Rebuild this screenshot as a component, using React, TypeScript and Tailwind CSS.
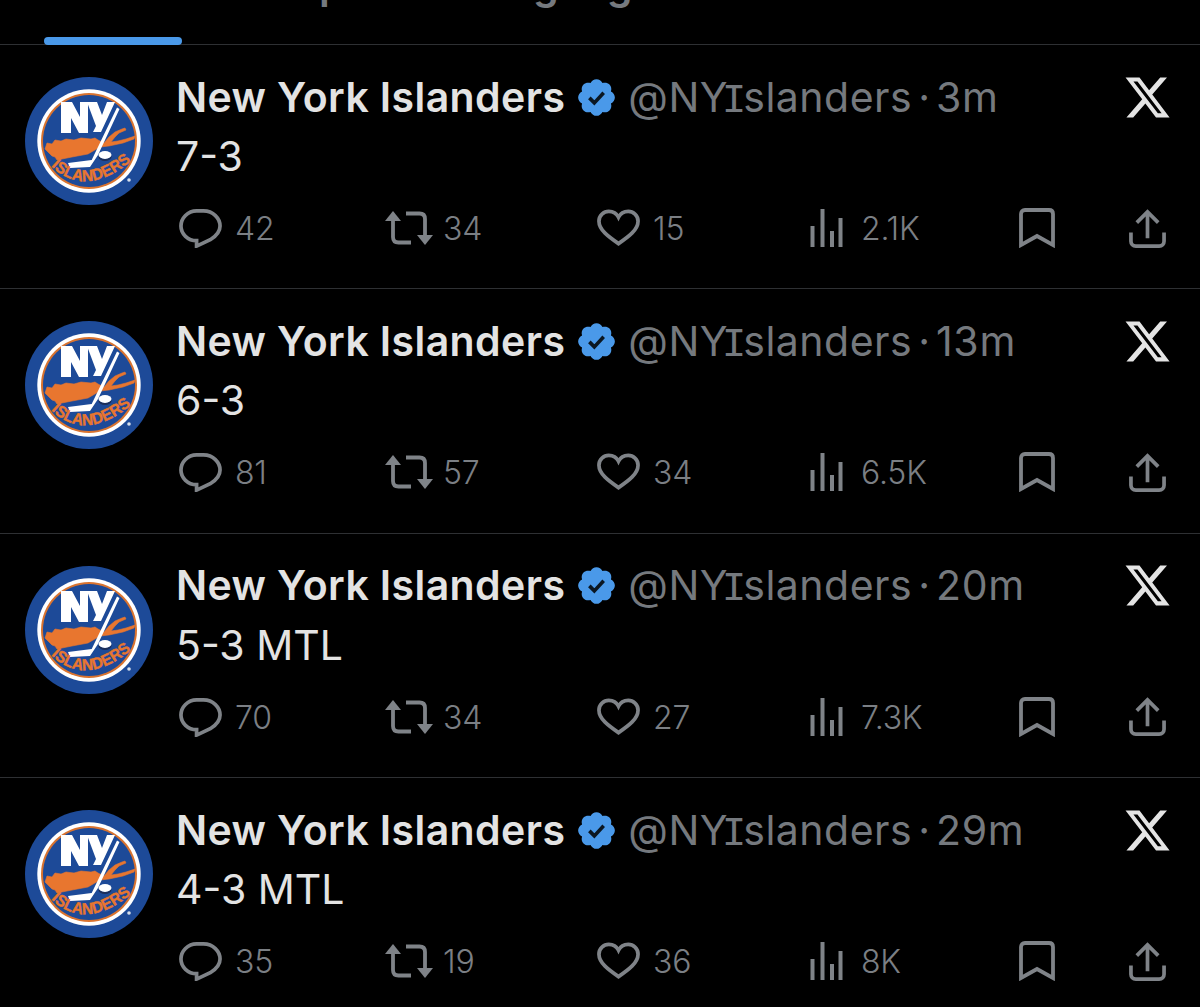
const FONT = "font-['Inter','Liberation_Sans',sans-serif]";

function Logo() {
  return (
    <svg viewBox="0 0 128 128" className="h-[128px] w-[128px] shrink-0">
      <circle cx="64" cy="64" r="64" fill="#1d4a98" />
      <circle cx="64" cy="64" r="51.7" fill="#ffffff" />
      <circle cx="64" cy="64" r="48" fill="#d9732f" />
      <circle cx="64" cy="64" r="46" fill="#1d4a98" />
      <path d="M36 25 H47 L55 40 V25 H63 V56 H54 L46 41 V56 H36 Z" fill="#ffffff" />
      <path d="M62 25 H72 L77 38 L82 25 H90 L76 55 H68 L71 49 Z" fill="#ffffff" />
      <path d="M20 72 l2 -6 l5 1 l3 -4 l6 1 l5 -2 l8 1 l7 -2 l10 1 l4 -1 l3 2 l6 3 l5 -6 l6 -5 l7 -3 l3 -1 l1 2 l-7 3 l-4 4 l-4 5 l7 -1 l8 -2 l9 -3 l-1 3 l-11 4 l-14 3 l-9 1 l-12 7 l-16 3 l-10 2 l-5 1 l-2 -3 l-3 -1 Z" fill="#e8762f" stroke="#e8762f" strokeWidth="0.6" />
      <path d="M92 30.5 L66.7 83 L43 86 L45 91 L65 90 L73 78 L94.5 32 Z" fill="#ffffff" />
      <ellipse cx="80" cy="78" rx="6.5" ry="4" fill="#ffffff" />
      <path d="M73.5 78 a6.5 4 0 0 0 13 0 v2 a6.5 4 0 0 1 -13 0 Z" fill="#1c2f5a" />
      <path id="logoArc" d="M26 89 Q60 122 106 84" fill="none" />
      <text fontFamily="Liberation Sans, sans-serif" fontWeight="700" fontSize="16" fill="#e8762f" stroke="#e8762f" strokeWidth="0.4">
        <textPath href="#logoArc" textLength="90" lengthAdjust="spacingAndGlyphs">ISLANDERS</textPath>
      </text>
      <circle cx="104" cy="103" r="1.8" fill="#d8e0ec" />
    </svg>
  );
}

function Badge() {
  return (
    <svg viewBox="0 0 24 24" className="h-[43px] w-[43px] shrink-0" fill="#4a99e9">
      <path d="M22.25 12c0-1.43-.88-2.67-2.19-3.34.46-1.39.2-2.9-.81-3.91s-2.52-1.27-3.91-.81c-.66-1.31-1.91-2.19-3.34-2.19s-2.67.88-3.33 2.19c-1.4-.46-2.91-.2-3.92.81s-1.26 2.52-.8 3.91c-1.31.67-2.2 1.91-2.2 3.34s.89 2.67 2.2 3.34c-.46 1.39-.21 2.9.8 3.91s2.52 1.26 3.91.81c.67 1.31 1.91 2.19 3.34 2.19s2.68-.88 3.34-2.19c1.39.45 2.9.2 3.91-.81s1.27-2.52.81-3.91c1.31-.67 2.19-1.91 2.19-3.34z" />
      <path d="M8 12.2l2.8 2.8 5.2-5.6" fill="none" stroke="#0b1722" strokeWidth="2" />
    </svg>
  );
}

function XLogo() {
  return (
    <svg viewBox="0 0 24 24" className="h-[49px] w-[49px] shrink-0" fill="#e4e4e4">
      <path d="M18.244 2.25h3.308l-7.227 8.26 8.502 11.24H16.17l-5.214-6.817L4.99 21.75H1.68l7.73-8.835L1.254 2.25H8.08l4.713 6.231zm-1.161 17.52h1.833L7.084 4.126H5.117z" />
    </svg>
  );
}

function Reply() {
  return (
    <svg viewBox="0 0 44 40" className="h-[40px] w-[43px]" fill="none" stroke="#7f8388" strokeWidth="3.8">
      <path d="M18 2.5 h7 C35 2.5 42 10 42 18 C42 25 37 29 32 32 L18 38.5 V33 C9 33 2 26 2 18 C2 10 9 2.5 18 2.5 Z" />
    </svg>
  );
}

function Retweet() {
  return (
    <svg viewBox="0 0 48 34" className="h-[34px] w-[48px]" fill="none" stroke="#7f8388" strokeWidth="3.8">
      <path d="M8 3 V26 Q8 31.5 13.5 31.5 H26" />
      <path d="M21 2.5 H34.5 Q40 2.5 40 8 V31" />
      <path d="M8 0 L16 10 H0 Z" fill="#7f8388" stroke="none" />
      <path d="M40 34 L32 24 H48 Z" fill="#7f8388" stroke="none" />
    </svg>
  );
}

function Heart() {
  return (
    <svg viewBox="0 0 44 38" className="h-[38px] w-[43px]" fill="none" stroke="#7f8388" strokeWidth="3.8">
      <path d="M22 35 C12 28 2 21 2 12 C2 6 7 2 12 2 C16 2 20 4 22 8 C24 4 28 2 32 2 C37 2 42 6 42 12 C42 21 32 28 22 35 Z" />
    </svg>
  );
}

function Views() {
  return (
    <svg viewBox="0 0 33 38" className="h-[38px] w-[33px]" fill="#7f8388">
      <rect x="0.5" y="17" width="4" height="21" />
      <rect x="10.5" y="0" width="4" height="38" />
      <rect x="20" y="22" width="4" height="16" />
      <rect x="28.5" y="9" width="4" height="29" />
    </svg>
  );
}

function Bookmark() {
  return (
    <svg viewBox="0 0 36 40" className="h-[40px] w-[36px]" fill="none" stroke="#7f8388" strokeWidth="3.8">
      <path d="M2 37 V6 C2 3.5 3.5 2 6 2 H30 C32.5 2 34 3.5 34 6 V37 L18 28 Z" />
    </svg>
  );
}

function Share() {
  return (
    <svg viewBox="0 0 38 40" className="h-[39px] w-[37px]" fill="none" stroke="#7f8388" strokeWidth="3.8">
      <path d="M19 30 V4 M8 14 L19 3 L30 14" />
      <path d="M2 24 V33 C2 36 4 38 7 38 H31 C34 38 36 36 36 33 V24" />
    </svg>
  );
}

type Tweet = {
  time: string;
  text: string;
  replies: string;
  retweets: string;
  likes: string;
  views: string;
};

const tweets: Tweet[] = [
  { time: "3m", text: "7-3", replies: "42", retweets: "34", likes: "15", views: "2.1K" },
  { time: "13m", text: "6-3", replies: "81", retweets: "57", likes: "34", views: "6.5K" },
  { time: "20m", text: "5-3 MTL", replies: "70", retweets: "34", likes: "27", views: "7.3K" },
  { time: "29m", text: "4-3 MTL", replies: "35", retweets: "19", likes: "36", views: "8K" },
];

function Stat({ icon, value, width, gap }: { icon: React.ReactNode; value: string; width: string; gap: string }) {
  return (
    <div className={`flex items-center ${width}`}>
      {icon}
      <span className={`${gap} pt-[2px] text-[32px] font-light leading-none tracking-[-0.2px] text-[#7b7f84]`}>{value}</span>
    </div>
  );
}

function Row({ t }: { t: Tweet }) {
  return (
    <div className="flex h-[244.4px] border-b border-[#2e3033] pl-[25px] pr-[28px] pt-[32px]">
      <Logo />
      <div className="ml-[23px] flex-1">
        <div className="flex h-[40px] items-center justify-between">
          <div className="flex items-center whitespace-nowrap">
            <span className="text-[41px] font-semibold leading-none tracking-[0.4px] text-[#e3e3e3]">New York Islanders</span>
            <span className="ml-[10px]"><Badge /></span>
            <span className="ml-[10px] pt-[4px] text-[41px] leading-none tracking-[0.5px] text-[#75797e]">
              @N<span className="tracking-[-6px]">Y</span><span className="font-['Liberation_Mono',monospace] tracking-[-3px]">I</span>slanders
            </span>
            <span className="mx-[6px] text-[41px] leading-none text-[#75797e]">·</span>
            <span className="text-[41px] leading-none tracking-[0.7px] text-[#75797e]">{t.time}</span>
          </div>
          <XLogo />
        </div>
        <div className="mt-[19px] text-[41px] leading-none text-[#e3e3e3]">{t.text}</div>
        <div className="mt-[31px] flex items-center pl-[3px]">
          <Stat icon={<Reply />} value={t.replies} gap="ml-[13px]" width="w-[206px]" />
          <Stat icon={<Retweet />} value={t.retweets} gap="ml-[10px]" width="w-[212px]" />
          <Stat icon={<Heart />} value={t.likes} gap="ml-[13px]" width="w-[213px]" />
          <Stat icon={<Views />} value={t.views} gap="ml-[18px]" width="w-[209px]" />
          <Bookmark />
          <div className="ml-[74px]"><Share /></div>
        </div>
      </div>
    </div>
  );
}

export default function App() {
  return (
    <div className={`h-[1007px] w-[1200px] overflow-hidden bg-black ${FONT}`}>
      <div className="relative h-[45px] border-b border-[#2e3033]">
        <div className="flex -translate-y-[36px] whitespace-nowrap text-[41px] font-semibold leading-none tracking-[0.4px] text-[#75797e]">
          <span className="ml-[50px]">Tweets</span>
          <span className="ml-[72px]">Replies</span>
          <span className="ml-[76px]">Highlights</span>
        </div>
        <div className="absolute bottom-[-1px] left-[44px] h-[8px] w-[138px] rounded-full bg-[#4a99e9]" />
      </div>
      {tweets.map((t) => (
        <Row key={t.time} t={t} />
      ))}
    </div>
  );
}
